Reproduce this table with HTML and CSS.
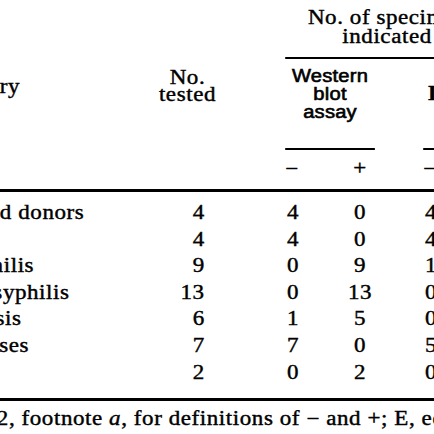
FILE: index.html
```html
<!DOCTYPE html>
<html lang="en">
<head>
<meta charset="utf-8">
<title>Table</title>
<link rel="stylesheet" href="styles.css">
</head>
<body>
<div class="page">
  <div class="sheet">
    <div class="grid head">
      <div class="stub-h">Study category</div>
      <div class="tested-h">No.<br>tested</div>
      <div class="group-h">No. of specimens with<br>indicated result</div>
      <div class="assay-h wb">Western<br>blot<br>assay</div>
      <div class="assay-h e2">IgG ELISA</div>
      <div class="sign c4">−</div>
      <div class="sign c6">+</div>
      <div class="sign c8">−</div>
      <div class="sign c10">+</div>
    </div>
    <div class="rule"></div>
    <div class="grid body">
      <div class="lab">Healthy blood donors</div><div class="n">4</div><div class="m c4">4</div><div class="p c6">0</div><div class="m c8">4</div><div class="p c10">0</div>
      <div class="lab">Infants</div><div class="n">4</div><div class="m c4">4</div><div class="p c6">0</div><div class="m c8">4</div><div class="p c10">0</div>
      <div class="lab">Primary syphilis</div><div class="n">9</div><div class="m c4">0</div><div class="p c6">9</div><div class="m c8">1</div><div class="p c10">8</div>
      <div class="lab">Early latent syphilis</div><div class="n">13</div><div class="m c4">0</div><div class="p c6">13</div><div class="m c8">0</div><div class="p c10">13</div>
      <div class="lab">Mononucleosis</div><div class="n">6</div><div class="m c4">1</div><div class="p c6">5</div><div class="m c8">0</div><div class="p c10">6</div>
      <div class="lab">Febrile diseases</div><div class="n">7</div><div class="m c4">7</div><div class="p c6">0</div><div class="m c8">5</div><div class="p c10">2</div>
      <div class="lab">Yaws</div><div class="n">2</div><div class="m c4">0</div><div class="p c6">2</div><div class="m c8">0</div><div class="p c10">2</div>
    </div>
    <div class="rule"></div>
    <p class="foot">See Table 2, footnote <i>a</i>, for definitions of − and +; E, equivocal.</p>
  </div>
</div>
</body>
</html>
```
FILE: styles.css
```css
html, body {
  margin: 0;
  padding: 0;
  background: #fff;
}

.page {
  width: 434px;
  height: 434px;
  overflow: hidden;
  background: #fff;
}

/* The scanned table is slightly wider than tall; stretch it horizontally. */
.sheet {
  margin-left: -110px;
  width: 600px;
  transform: scaleX(1.15);
  transform-origin: 110px 0;
  color: #000;
  font-family: "Liberation Serif", "Times New Roman", serif;
  font-size: 20px;
  letter-spacing: 0.5px;
  -webkit-text-stroke: 0.4px #000;
}

.grid {
  display: grid;
  grid-template-columns: 240px 66px 52px 17px 35px 26px 42px 17px 35px 26px 32px;
}

.head {
  grid-template-rows: 59px 91px 39px;
}

.stub-h {
  grid-column: 1;
  grid-row: 1 / 4;
  padding-top: 77px;
  line-height: 18.5px;
  white-space: nowrap;
}

.tested-h {
  grid-column: 2;
  grid-row: 1 / 4;
  padding-top: 69px;
  line-height: 17px;
  text-align: center;
}

.group-h {
  grid-column: 4 / 12;
  grid-row: 1;
  padding-top: 8px;
  line-height: 18.5px;
  text-align: center;
  white-space: nowrap;
  border-bottom: 2px solid #000;
}

.assay-h {
  grid-row: 2;
  border-bottom: 2px solid #000;
  white-space: nowrap;
}

.wb {
  grid-column: 4 / 7;
  padding-top: 7.9px;
  font-family: "Liberation Sans", Arial, sans-serif;
  font-size: 17.5px;
  letter-spacing: 0.2px;
  line-height: 18px;
  text-align: center;
  -webkit-text-stroke: 0.6px #000;
}

.e2 {
  grid-column: 8 / 11;
  padding-top: 25px;
  padding-left: 4px;
  line-height: 18px;
  font-weight: bold;
}

.sign {
  grid-row: 3;
  padding-top: 8px;
  line-height: 20px;
}

.c4 { grid-column: 4; }
.c6 { grid-column: 6; text-align: center; }
.c8 { grid-column: 8; }
.c10 { grid-column: 10; text-align: center; }

.rule {
  height: 3px;
  background: #000;
}

.body {
  grid-auto-rows: 26.6px;
  line-height: 26.6px;
  padding: 7px 0 13px;
}

.lab {
  grid-column: 1;
  white-space: nowrap;
}

.n {
  grid-column: 2;
  text-align: right;
  padding-right: 18px;
}

.m {
  padding-left: 1.5px;
}

.foot {
  margin: 7px 0 0;
  padding-left: 19.6px;
  line-height: 20px;
  white-space: nowrap;
}
```
